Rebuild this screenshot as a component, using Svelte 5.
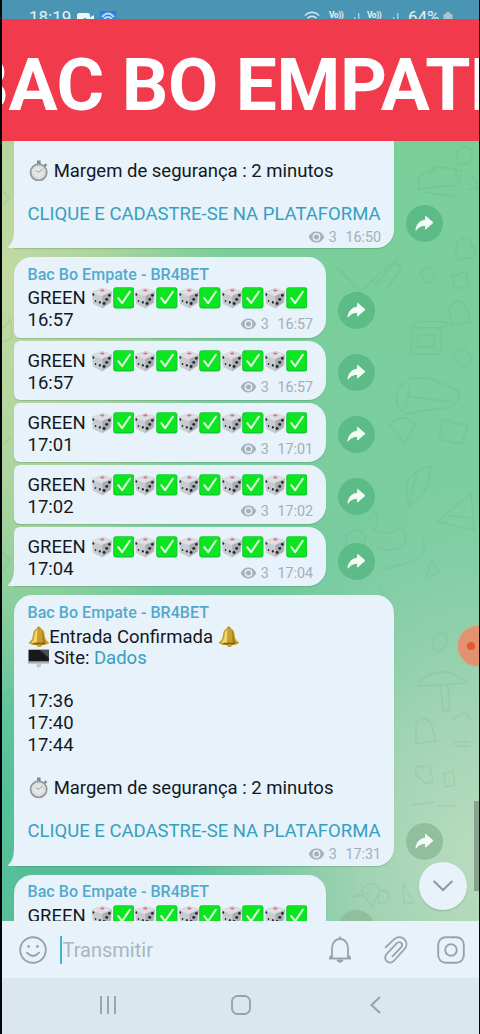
<script>
  const greens = [
    { time: '16:57', name: true },
    { time: '16:57' },
    { time: '17:01' },
    { time: '17:02' },
    { time: '17:04', tail: true }
  ];
  const channel = 'Bac Bo Empate - BR4BET';
  const doodles = [
    'M418 178q20-18 44-6l-5 13-38 4zM424 192l32 5M430 176l5-9 20 2 2 8',
    'M456 152l8-6 9 5-3 12-11 2zM470 176q8 3 7 12l-9 2',
    'M459 240q12-6 12 6 8 2 2 11l-14 3q-7-9 0-20M452 276l14-4 3 14-14 3z',
    'M334 266l14 12M340 270l20 22 38-34M375 285l18-20q8-4 7 6l-14 19M420 272q8-8 13 0t-8 11z',
    'M412 328h29v26h-30zM418 335h16v12h-17zM411 328l6-6h31l-6 7M449 308q10-14 18 0l3 14-18 3z',
    'M398 391q8-19 36-11l26 12q-2 18-26 17l-28 5q-14-8-8-23M405 396l48 6M410 386l-5 23',
    'M452 356l12-7 9 8-10 12zM443 420l25 6-7 18-22-5zM390 425q14-14 25 0l-10 18z',
    'M409 505q-10-33 22-39-3 31-22 39M417 470l-7 32M438 522l33-29 3 37zM449 516l21 2',
    'M374 511q8 12-1 19 14 8 26-3 11 8 4 18-12 9-25 2M346 536q12-12 20 0l-4 17-16-3z',
    'M382 570l28-8q20-9 12-24M379 584l6 22M431 560l8 12-13 7z',
    'M434 637l11-6 3 12-9 9-7-4zM421 680q24-18 46 3l-48 3zM440 684l3 27 7-1-2-25',
    'M416 724q6-11 15-1l5 18-20 3zM453 742h17M454 746h16M452 720l13-8 7 9',
    'M417 776q-5-13 6-9 9-4 8 7 5 9-6 9zM444 774l9-3 2 14-10 2zM412 805l22-3M438 806h17',
    'M353 897l17-4M361 891q11-14 19-1l-8 17zM379 904q-4-16 8-13 7 11-8 13M403 883l10 20-9 1z',
    'M2 190l7 8-6 7M2 329l9-10 1 19-9 4M3 445l8-7M2 552l8 8-7 11M3 698l8-10 1 22M2 790l9 8'
  ];
</script>

{#snippet dice()}
  <svg class="em" viewBox="0 0 22 22">
    <path d="M2 5.5 11.5 2 20.5 5 19.5 15.5 11.5 20.8 3 16.5z" fill="#c8cbcf" stroke="#c8cbcf" stroke-width="2" stroke-linejoin="round" />
    <path d="M2 5.5 11.5 2 20.5 5 11.6 9z" fill="#dddfe3" stroke="#dddfe3" stroke-linejoin="round" />
    <path d="M11.6 9 20.7 5.2 19.6 15.5 11.6 20.8z" fill="#a9acb1" />
    <ellipse cx="11.5" cy="3.6" rx="2.2" ry="1" fill="#d96b86" />
    <g fill="#26282c">
      <ellipse cx="2.400" cy="7.600" rx=".9" ry="1.3" /><ellipse cx="9" cy="15.6" rx="1" ry="1.4" /><ellipse cx="4.600" cy="14.200" rx=".8" ry="1.1" />
      <circle cx="18.7" cy="8.4" r="1.4" /><circle cx="16" cy="12.6" r="1.5" /><circle cx="13.3" cy="16.8" r="1.5" />
    </g>
  </svg>
{/snippet}

{#snippet check()}
  <svg class="em" viewBox="0 0 22 22">
    <rect x=".2" y=".2" width="21.600" height="21.600" rx="3" fill="#0ccb2c" />
    <rect x="1.2" y="1" width="19.600" height="19.400" rx="2.400" fill="#0ce51f" />
    <path d="M5.3 11.4 9.3 16.4 17.1 4.8" fill="none" stroke="#dcffe0" stroke-width="2.1" stroke-linecap="round" stroke-linejoin="round" />
  </svg>
{/snippet}

{#snippet bell()}
  <svg class="em" viewBox="0 0 22 22">
    <circle cx="11" cy="2.300" r="1.9" fill="#b98a22" />
    <path d="M11 2.200c4.200 0 5.700 3.200 6 7.200.3 3.600 1.400 5.300 4.500 7.600-1 1.700-6 2.700-10.500 2.700S1.500 18.700.5 17c3.100-2.300 4.200-4 4.500-7.600.3-4 1.800-7.200 6-7.200z" fill="#c9a02c" />
    <path d="M9.500 3.500C7 5 6.700 8 6.400 11c-.2 2.500-1.400 4.500-3 6 2 .8 4 1 5.600 1z" fill="#f0d76c" />
    <path d="M14 4c2.400 3 1 9.500 4.600 13.300-1 .7-2.500 1-3.600 1z" fill="#a27a1b" />
    <ellipse cx="11" cy="18" rx="6.500" ry="1.200" fill="#86641c" />
    <ellipse cx="11.500" cy="19.800" rx="2.300" ry="1.600" fill="#c99d2a" />
  </svg>
{/snippet}

{#snippet monitor()}
  <svg class="em" viewBox="0 0 22 22">
    <path d="M.3 2.500h21.400v14H.3z" fill="#80868c" />
    <path d="M.8 3h20.400v11.500H.8z" fill="#17191d" />
    <path d="M12 3h9.200v8z" fill="#4c5056" />
    <path d="M.3 14.700h21.400v1.900H.3z" fill="#a9adb2" />
    <path d="M8.500 16.700h5l-.5 3-2 1.300-2-1.300z" fill="#c4c8cc" />
  </svg>
{/snippet}

{#snippet watch()}
  <svg class="em" viewBox="0 0 22 22">
    <path d="M9.200.600h3.600v3.500H9.200zM17.600 3.200l2 2-2 2-1.600-1.700z" fill="#85898c" />
    <circle cx="10.800" cy="12.500" r="8.200" fill="#e4e7e8" stroke="#969a9d" stroke-width="1.900" />
    <circle cx="10.800" cy="12.500" r="5.700" fill="none" stroke="#b3b7b9" stroke-width="1" stroke-dasharray="1 2" />
    <path d="M10.800 12.500 15 9M10.800 12.500 8 11" stroke="#a09a9a" stroke-width="1" />
  </svg>
{/snippet}

{#snippet meta(time)}
  <span class="meta">
    <svg width="17" height="12" viewBox="0 0 17 12">
      <path d="M.7 6C2.400 2.300 5.100.5 8.500.5s6.100 1.800 7.800 5.500c-1.700 3.700-4.400 5.500-7.800 5.500S2.400 9.700.7 6z" fill="#a5b2bb" />
      <circle cx="8.500" cy="6" r="3.900" fill="#e7f2fb" /><circle cx="8.500" cy="6" r="2.500" fill="#a5b2bb" />
    </svg>
    <span class="views">3</span><span>{time}</span>
  </span>
{/snippet}

{#snippet share(kind)}
  <span class="share {kind}">
    <svg width="19" height="17" viewBox="0 0 19 17">
      <path d="M10.600 1.300 18 7.600l-7.400 6.500v-3.700C6.300 10.200 3.200 11.900 1 15.200c.3-5.600 3.800-9.500 9.600-10.200z" fill="#f4fbf7" stroke="#f4fbf7" stroke-linejoin="round" />
    </svg>
  </span>
{/snippet}

{#snippet tail()}
  <svg class="tail" width="8" height="18" viewBox="0 0 8 18"><path d="M6 0H8V18H.6Q-.4 17.400.6 16.500Q6 12 6 0z" fill="#e7f2fb" /></svg>
{/snippet}

{#snippet green()}
  <div class="line"><span class="word">GREEN</span>{#each Array(5) as _}{@render dice()}{@render check()}{/each}</div>
{/snippet}

<div class="screen">
  <header class="status">
    <span class="clock">18:19</span>
    <svg class="cam" width="18" height="14" viewBox="0 0 18 14"><rect y="1" width="13" height="12" rx="2" fill="#eef6fa" /><path d="M12 6l5-3v8l-5-2z" fill="#eef6fa" /><circle cx="8" cy="8" r="2" fill="#4a95b3" /></svg>
    <svg width="16" height="14" viewBox="0 0 16 14"><rect width="16" height="14" rx="1" fill="#2c7fe0" /><path d="M2 6q6-7 12 0M4 8q4-4 8 0" fill="none" stroke="#b9daf8" stroke-width="2" /></svg>
    <span class="right">
      <svg width="16" height="13" viewBox="0 0 16 13" fill="none" stroke="#d7e8ef" stroke-width="1.500"><path d="M.8 4.500q7.200-6.500 14.400 0M3.300 7.300q4.700-4.200 9.400 0M5.800 10q2.200-2 4.400 0" /></svg>
      <span class="vo">Vo))</span>
      <svg class="sig" width="7" height="13" viewBox="0 0 7 13" fill="#a9cbd9"><path d="M0 5h1.500v8H0zM4 1h1.500v12H4z" /></svg>
      <span class="vo">Vo))</span>
      <svg class="sig" width="7" height="13" viewBox="0 0 7 13" fill="#a9cbd9"><path d="M0 5h1.500v8H0zM4 1h1.500v12H4z" /></svg>
      <span class="pct">64%</span>
      <svg width="10" height="14" viewBox="0 0 10 14"><path d="M3 0h4v2h2.500v12h-9V2H3z" fill="#a6c6d4" /></svg>
    </span>
  </header>

  <div class="banner"><span>BAC BO EMPATE</span></div>

  <main class="chat">
    <svg class="doodles" width="480" height="780" viewBox="0 141 480 780">
      {#each doodles as d}<path {d} />{/each}
    </svg>

    <div class="row first">
      <div class="bubble wide cut">
        <div class="line margin">{@render watch()}<span>Margem de segurança : 2 minutos</span></div>
        <div class="line"></div>
        <div class="line link">CLIQUE E CADASTRE-SE NA PLATAFORMA</div>
        <div class="foot">{@render meta('16:50')}</div>
        {@render tail()}
      </div>
      {@render share('low')}
    </div>

    {#each greens as g}
      <div class="row" class:head={g.name}>
        <div class="bubble small" class:top={g.name} class:last={g.tail}>
          {#if g.name}<div class="name">{channel}</div>{/if}
          {@render green()}
          <div class="line end"><span>{g.time}</span>{@render meta(g.time)}</div>
          {#if g.tail}{@render tail()}{/if}
        </div>
        {@render share(g.tail ? 'low' : '')}
      </div>
    {/each}

    <div class="row head">
      <div class="bubble wide top last">
        <div class="name">{channel}</div>
        <div class="line">{@render bell()}<span class="entry">Entrada Confirmada</span>{@render bell()}</div>
        <div class="line site">{@render monitor()}<span>Site:</span><span class="link">Dados</span></div>
        <div class="line"></div>
        <div class="line">17:36</div>
        <div class="line">17:40</div>
        <div class="line">17:44</div>
        <div class="line"></div>
        <div class="line margin">{@render watch()}<span>Margem de segurança : 2 minutos</span></div>
        <div class="line"></div>
        <div class="line link">CLIQUE E CADASTRE-SE NA PLATAFORMA</div>
        <div class="foot">{@render meta('17:31')}</div>
        {@render tail()}
      </div>
      {@render share('low pale')}
    </div>

    <div class="row head">
      <div class="bubble small top partial">
        <div class="name">{channel}</div>
        {@render green()}
      </div>
      {@render share('pale')}
    </div>

    <span class="record"><i></i></span>
    <span class="thumb"></span>
    <span class="down"><svg width="20" height="12" viewBox="0 0 20 12"><path d="M1.200 1.500 10 10l8.800-8.500" fill="none" stroke="#8d989f" stroke-width="2" stroke-linecap="round" /></svg></span>
  </main>

  <div class="compose">
    <svg width="28" height="28" viewBox="0 0 28 28" fill="none" stroke="#98a2a9" stroke-width="1.900" stroke-linecap="round">
      <circle cx="14" cy="14" r="12.800" /><path d="M8 16.700q6 6.500 12 0" /><circle cx="9.600" cy="10.500" r="1" fill="#98a2a9" stroke-width="1" /><circle cx="18.400" cy="10.500" r="1" fill="#98a2a9" stroke-width="1" />
    </svg>
    <span class="caret"></span>
    <span class="hint">Transmitir</span>
    <svg class="ring" width="24" height="27" viewBox="0 0 24 27" fill="none" stroke="#98a2a9" stroke-width="1.800" stroke-linejoin="round">
      <path d="M1 22.500h22M4 22v-9.500C4 7 7.200 3 12 3s8 4 8 9.500V22M1.500 22 4 19M22.500 22 20 19M12 .5V3" /><path d="M9.500 24.500q2.500 2.600 5 0z" fill="#98a2a9" />
    </svg>
    <svg class="clip" width="24" height="28" viewBox="0 0 24 28" fill="none" stroke="#98a2a9" stroke-width="1.800" stroke-linecap="round">
      <path d="M1.600 11.400 9.700 3.700c3.200-3 7.500-3.400 10.600-.5 3.200 3.200 2.700 7.400-.3 10.500l-9.800 10.800c-2.300 2.500-5.300 2.700-7.500.6s-2.100-5 .1-7.300l9.800-10.400c1.500-1.500 3.300-1.600 4.600-.4 1.200 1.200 1.200 2.900-.2 4.400l-8.500 9" />
    </svg>
    <svg width="28" height="28" viewBox="0 0 28 28" fill="none" stroke="#98a2a9" stroke-width="1.900"><rect x="1.200" y="1.200" width="25.600" height="25.600" rx="7.500" /><circle cx="14" cy="14" r="5.800" /></svg>
  </div>

  <nav>
    <svg width="20" height="18" viewBox="0 0 20 18" stroke="#98a2a9" stroke-width="1.900"><path d="M3 0v18M10 0v18M17 0v18" /></svg>
    <svg width="20" height="20" viewBox="0 0 20 20" fill="none" stroke="#98a2a9" stroke-width="1.900"><rect x="1" y="1" width="18" height="18" rx="5.500" /></svg>
    <svg width="11" height="18" viewBox="0 0 11 18" fill="none" stroke="#98a2a9" stroke-width="2"><path d="M10 1 1.500 9l8.500 8" /></svg>
  </nav>
</div>

<style>
  :global(body) { margin: 0; background: #000; }
  .screen {
    box-sizing: border-box; width: 480px; height: 1034px; overflow: hidden;
    display: flex; flex-direction: column;
    font-family: Roboto, "Liberation Sans", sans-serif; color: #14181c;
    border-left: 2px solid #030608; border-right: 1px solid #030608; background: #4a95b3;
  }
  .status { height: 19px; flex: none; display: flex; align-items: flex-start; overflow: hidden; padding: 0 0 0 27px; color: #e5f0f5; }
  .status svg { margin-top: 12px; flex: none; }
  .clock { width: 48px; font-size: 17px; line-height: 20px; margin-top: 7px; }
  .status .cam { margin-right: 5px; }
  .status .cam + svg { margin-top: 11px; }
  .right { margin-left: auto; display: flex; align-items: flex-start; padding-right: 26px; }
  .right svg:first-child { margin-right: 9px; margin-top: 11px; }
  .vo { font-size: 8.500px; letter-spacing: -.5px; font-weight: 700; line-height: 12px; margin-top: 9px; width: 26px; }
  .vo:nth-of-type(1) { width: 25px; }
  .status .sig { margin-right: 6px; }
  .pct { font-size: 17px; line-height: 20px; margin: 7px 4px 0 2px; width: 31px; white-space: nowrap; }
  .banner {
    height: 122px; flex: none; margin: 0 -2px; background: #f13b4c; position: relative; z-index: 2;
    display: flex; justify-content: center; overflow: hidden; box-sizing: border-box; padding: 5px 8px 0 0;
    color: #fff; font-weight: 700; font-size: 73px; line-height: 122px; letter-spacing: -.35px; white-space: nowrap;
  }
  .chat {
    position: relative; flex: none; height: 780px; overflow: hidden;
    display: flex; flex-direction: column; padding-left: 12px; box-sizing: border-box;
    background:
      radial-gradient(ellipse 300px 380px at 100% 92%, #bbdcbf 0%, rgba(178,216,184,.8) 40%, rgba(160,212,175,0) 100%),
      radial-gradient(ellipse 220px 440px at 0% 18%, #c3d9a2 0%, rgba(185,214,158,.8) 45%, rgba(140,206,157,0) 100%),
      linear-gradient(180deg, #7acf99 0%, #7bcd9e 45%, #54c09a 85%, #58be99 100%);
  }
  .doodles { position: absolute; left: -2px; top: 0; fill: none; stroke: #46946b; stroke-opacity: .12; stroke-width: 1.400; stroke-linejoin: round; }
  .row { position: relative; display: flex; align-items: flex-end; flex: none; margin-top: 3px; }
  .row.first { margin-top: 0; }
  .row.head { margin-top: 9px; }
  .bubble {
    position: relative; box-sizing: border-box; background: #e7f2fb; padding: 10px 13px 5px 13.500px;
    border-radius: 6px 18px 18px 6px; box-shadow: 0 1px 1px rgba(70,110,90,.28);
    font-size: 18.500px; line-height: 21.650px;
  }
  .small { width: 312px; height: 59px; }
  .wide { width: 380px; }
  .top { border-top-left-radius: 18px; padding-top: 7.500px; }
  .small.top { height: 81px; }
  .small.partial { padding-top: 7px; }
  .wide.top { height: 271px; }
  .cut { height: 107px; border-radius: 0 0 18px 0; padding-top: 19.500px; }
  .last { border-bottom-left-radius: 0; }
  .tail { position: absolute; left: -6px; bottom: 0; }
  .name { height: 23.500px; line-height: 20px; font-size: 16px; font-weight: 500; color: #53a9cd; white-space: nowrap; letter-spacing: .05px; }
  .wide .name { height: 24px; }
  .line { height: 21.650px; display: flex; align-items: center; white-space: nowrap; }
  .em { width: 21.650px; height: 21.650px; flex: none; display: block; margin-top: -1.500px; }
  .word { width: 63.500px; }
  .margin span { margin-left: 4.500px; }
  .site span { margin-left: 4.500px; }
  .entry { margin-right: 4.500px; }
  .link { color: #369fc0; }
  .end { justify-content: space-between; }
  .foot { height: 23px; display: flex; justify-content: flex-end; align-items: center; }
  .meta { display: flex; align-items: center; font-size: 14.300px; line-height: 16px; color: #a2afb8; }
  .end .meta { padding-top: 8px; }
  .views { margin: 0 8.500px 0 4px; }
  .share {
    width: 37px; height: 37px; border-radius: 50%; margin: 0 0 9px 12px; flex: none;
    display: flex; align-items: center; justify-content: center; background: #5cbb87;
  }
  .share.low { margin-bottom: 6px; }
  .pale { background: #91be9d; }
  .record { position: absolute; left: 456px; top: 485px; width: 40px; height: 40px; border-radius: 50%; background: #e2926f; box-shadow: 0 0 3px #e2a582; display: flex; align-items: center; }
  .record i { width: 8px; height: 8px; border-radius: 50%; background: #e4592b; margin-left: 9px; }
  .thumb { position: absolute; right: 0; top: 660px; width: 5px; height: 90px; background: #88a48f; }
  .down { position: absolute; left: 417px; top: 721px; width: 48px; height: 48px; border-radius: 50%; background: #e7f2fb; display: flex; align-items: center; justify-content: center; box-shadow: 0 1px 2px rgba(80,120,100,.3); }
  .compose { height: 57px; flex: none; background: #e7f2fb; display: flex; align-items: center; padding: 0 14px 0 16.500px; }
  .caret { width: 2px; height: 28px; background: #3eb4cf; margin-left: 13px; }
  .hint { font-size: 20px; line-height: 24px; color: #aab6be; margin-left: 1px; margin-top: 1px; }
  .ring { margin-left: auto; margin-right: 32px; }
  .clip { margin-right: 29.500px; }
  nav { height: 56px; flex: none; background: #dbe7ef; display: flex; align-items: center; padding: 0 0 3px 96px; gap: 113px; box-sizing: border-box; }
  nav svg:last-child { margin-left: 6px; }
</style>
